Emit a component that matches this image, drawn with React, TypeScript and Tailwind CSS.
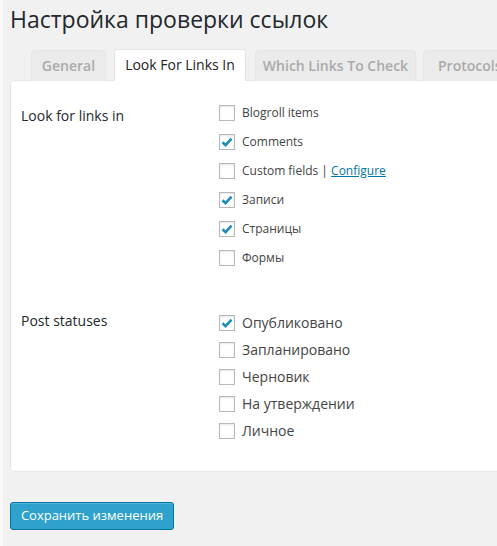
import React from "react";

const font = { fontFamily: '"Open Sans", "Noto Sans", sans-serif' };

function Box({ checked }: { checked?: boolean }) {
  return (
    <span className="flex h-[16px] w-[16px] shrink-0 items-center justify-center border border-[#b4b9be] bg-white shadow-[inset_0_1px_2px_rgba(0,0,0,0.1)]">
      {checked && (
        <svg width="14" height="14" viewBox="0 0 14 14">
          <path d="M2.5 7.2 L5.6 10.2 L11.5 3.6" fill="none" stroke="#1e8cbe" strokeWidth="2.6" strokeLinecap="butt" strokeLinejoin="miter" />
        </svg>
      )}
    </span>
  );
}

function Row({ checked, children, h, size }: { checked?: boolean; children: React.ReactNode; h: string; size: string }) {
  return (
    <div className={`flex items-center gap-[7px] ${h}`}>
      <Box checked={checked} />
      <span className={`${size} text-[#444]`}>{children}</span>
    </div>
  );
}

export default function App() {
  return (
    <div className="h-[546px] w-[497px] overflow-hidden border-l-[3px] border-[#f9f9f9] bg-[#f1f1f1]" style={font}>
      <div className="pl-[7px] pt-[4px]">
        <h1 className="text-[23px] font-normal leading-[30px] text-[#23282d]">Настройка проверки ссылок</h1>
        <div className="mt-[15px] flex w-[600px] items-end pl-[21px] text-[14px] leading-[20px]">
          <div className="relative z-0 mb-[-1px] flex h-[31px] w-[75px] shrink-0 items-center justify-center rounded-t-[4px] border border-b-0 border-[#e5e5e5] bg-[#ebebeb] font-semibold text-[#aaa]">General</div>
          <div className="relative z-10 mb-[-1px] ml-[8px] flex h-[32px] w-[132px] shrink-0 items-center justify-center rounded-t-[4px] border border-b-0 border-[#e5e5e5] bg-white pb-[1px] text-[#222]">Look For Links In</div>
          <div className="relative z-0 mb-[-1px] ml-[9px] flex h-[31px] w-[161px] shrink-0 items-center justify-center rounded-t-[4px] border border-b-0 border-[#e5e5e5] bg-[#ebebeb] font-semibold text-[#aaa]">Which Links To Check</div>
          <div className="relative z-0 mb-[-1px] ml-[7px] flex h-[31px] w-[100px] shrink-0 items-center justify-start rounded-t-[4px] border border-b-0 border-[#e5e5e5] bg-[#ebebeb] pl-[14px] font-semibold text-[#aaa]">Protocols</div>
        </div>
        <div className="w-[520px] rounded-[4px] border border-[#e5e5e5] bg-white pb-[27px] pl-[10px] pt-[17px]">
          <div className="flex">
            <div className="w-[198px] pt-[8px] text-[14px] leading-[20px] text-[#23282d]">Look for links in</div>
            <div className="flex flex-col">
              <Row h="h-[29px]" size="text-[12px]">Blogroll items</Row>
              <Row h="h-[29px]" size="text-[12px]" checked>Comments</Row>
              <Row h="h-[29px]" size="text-[12px]">
                Custom fields | <span className="text-[#0074a2] underline">Configure</span>
              </Row>
              <Row h="h-[29px]" size="text-[12px]" checked>Записи</Row>
              <Row h="h-[29px]" size="text-[12px]" checked>Страницы</Row>
              <Row h="h-[29px]" size="text-[12px]">Формы</Row>
            </div>
          </div>
          <div className="mt-[37px] flex">
            <div className="w-[198px] pt-[2px] text-[14px] leading-[20px] text-[#23282d]">Post statuses</div>
            <div className="flex flex-col">
              <Row h="h-[27px]" size="text-[14px]" checked>Опубликовано</Row>
              <Row h="h-[27px]" size="text-[14px]">Запланировано</Row>
              <Row h="h-[27px]" size="text-[14px]">Черновик</Row>
              <Row h="h-[27px]" size="text-[14px]">На утверждении</Row>
              <Row h="h-[27px]" size="text-[14px]">Личное</Row>
            </div>
          </div>
        </div>
        <button className="mt-[30px] flex h-[28px] w-[164px] items-center justify-center rounded-[3px] border border-[#0074a2] bg-[#2ea2cc] text-[13px] text-white shadow-[inset_0_1px_0_rgba(120,200,230,0.5)]">
          Сохранить изменения
        </button>
      </div>
    </div>
  );
}
